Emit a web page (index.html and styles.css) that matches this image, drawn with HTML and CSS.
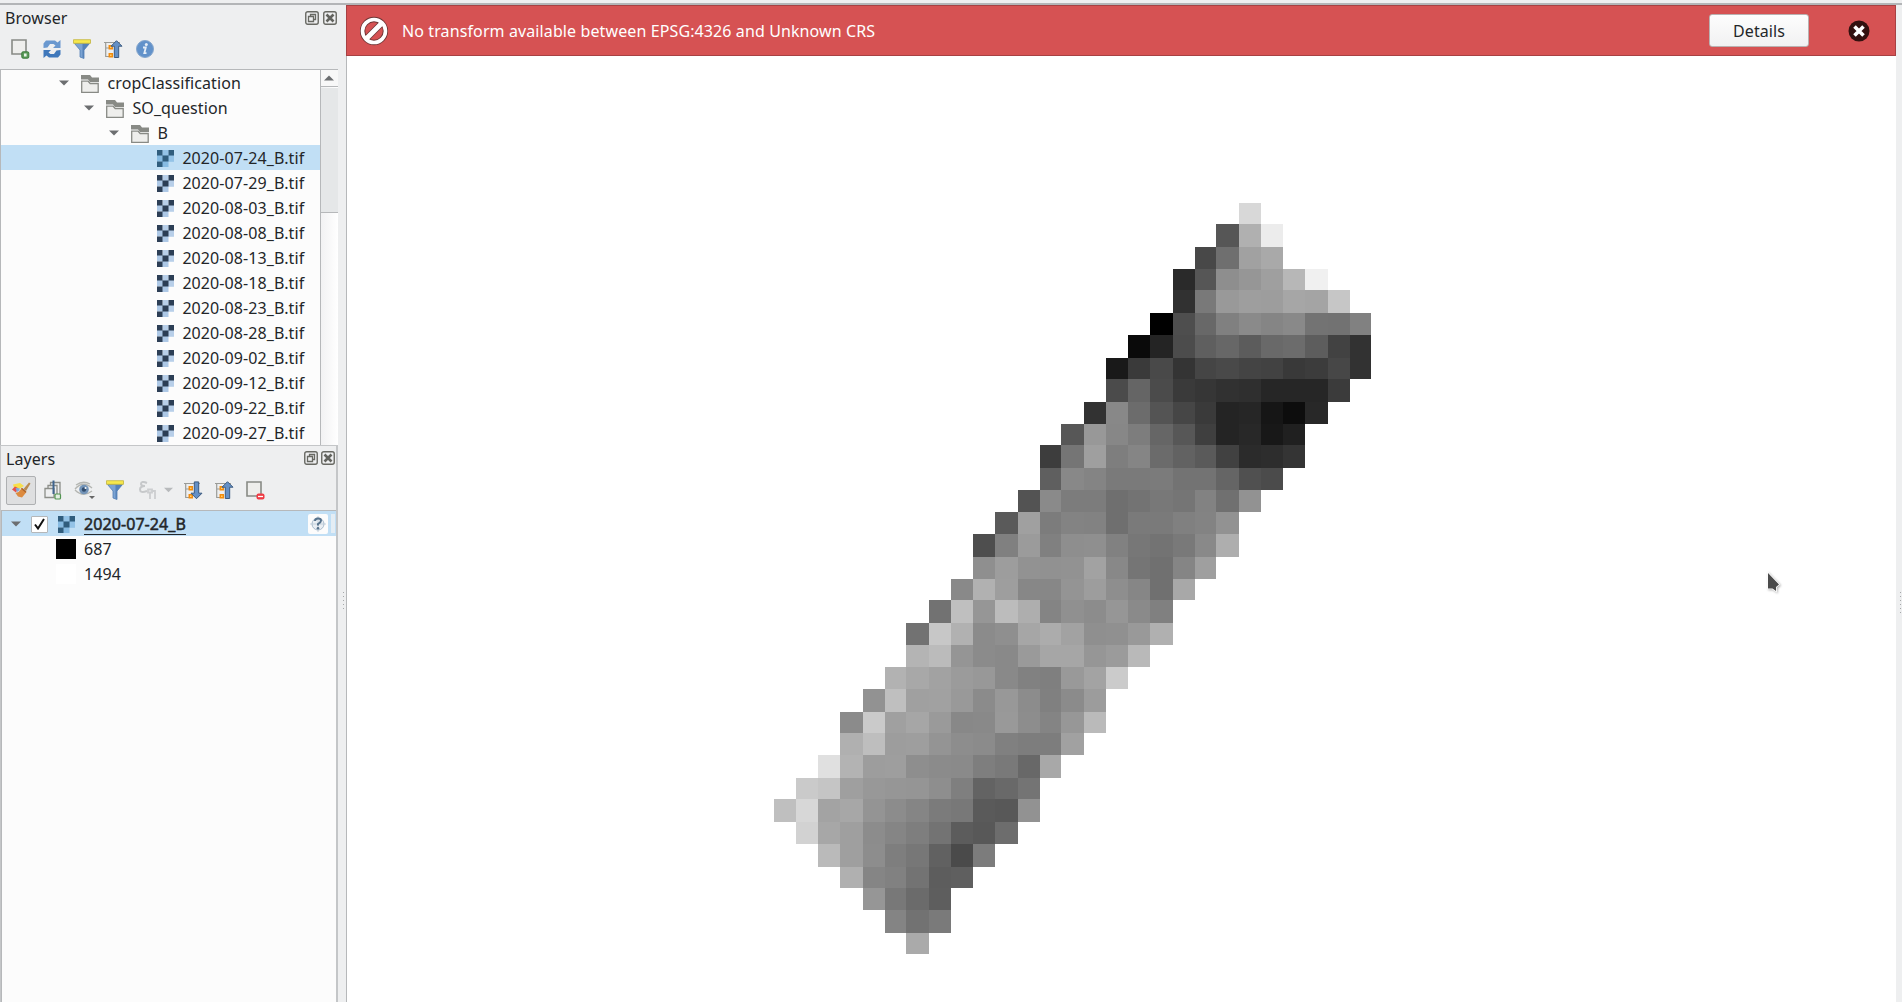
FILE: index.html
```html
<!DOCTYPE html>
<html lang="en">
<head>
<meta charset="utf-8">
<title>Browser and Layers</title>
<link rel="stylesheet" href="styles.css">
</head>
<body>
<svg class="defs" aria-hidden="true">
  <symbol id="raster" viewBox="0 0 17 17">
    <path class="r-light" d="M0 5h17v6.500H0zM5 11.500h6.500V17H5z"/>
    <path class="r-pale" d="M5.500 0h6v5.500h-6zM11.500 5.500H17v6h-5.500z"/>
    <path class="r-dark" d="M0 0h5.500v5.500H0zM11.500 0H17v5.500h-5.500zM5.500 5.500h6v6h-6zM0 11.500h5.500V17H0z"/>
  </symbol>
  <symbol id="folder" viewBox="0 0 18 18">
    <path d="M0 0h9l2 2.500h7V7H9L7 4.500H0z" fill="#888a85"/>
    <path d="M.7 6.200h6.500l2 2.300h8v8.800H.7z" fill="#eeeeec" stroke="#888a85" stroke-width="1.300"/>
  </symbol>
  <symbol id="caret" viewBox="0 0 10 6"><path d="M0 .5h10L5 5.500z" fill="#6c6e70"/></symbol>
  <symbol id="float" viewBox="0 0 14 14">
    <rect x=".75" y=".75" width="12.500" height="12.500" rx="2" fill="none" stroke="#686963" stroke-width="1.400"/>
    <path d="M5.500 5V3.500h5v5H9M3.500 5.500h5v5h-5z" fill="none" stroke="#686963" stroke-width="1.300"/>
  </symbol>
  <symbol id="close" viewBox="0 0 14 14">
    <rect x=".75" y=".75" width="12.500" height="12.500" rx="2" fill="none" stroke="#686963" stroke-width="1.400"/>
    <path d="M3.500 3.500l7 7M10.500 3.500l-7 7" stroke="#62635e" stroke-width="2.600"/>
  </symbol>
  <symbol id="filter" viewBox="0 0 18 20">
    <path d="M1.500 4.500h15L11 11v8.500l-4-1.500v-7z" fill="#7ba3d3" stroke="#527fb5" stroke-width=".8"/>
    <path d="M9.500 5h6.500l-5 6v8l-1.500-.5z" fill="#5582b8"/>
    <path d="M.5 .7h17v3.600H.5z" fill="#f6e84c" stroke="#c2b440" stroke-width=".8"/>
  </symbol>
  <symbol id="collapse" viewBox="0 0 19 19">
    <path d="M0 2.500h16M1.700 2.500v14H5M1.700 8H5" fill="none" stroke="#9a9b97" stroke-width="1.200"/>
    <path d="M5.300 5.700h3v3h-3zM5.300 13.700h3v3h-3z" fill="#ffd27a" stroke="#f28c0c" stroke-width="1.500"/>
    <path d="M12.500 .7l5.500 5.500h-3.300v11.300h-4.400V6.200H7z" fill="#6490c6" stroke="#3c5a80"/>
  </symbol>
  <symbol id="expand" viewBox="0 0 19 19">
    <path d="M0 2.500h16M1.700 2.500v14H5M1.700 8H5" fill="none" stroke="#9a9b97" stroke-width="1.200"/>
    <path d="M5.300 5.700h3v3h-3zM5.300 13.700h3v3h-3z" fill="#ffd27a" stroke="#f28c0c" stroke-width="1.500"/>
    <path d="M12.500 17.700l5.500-5.500h-3.300V.9h-4.400v11.300H7z" fill="#6490c6" stroke="#3c5a80"/>
  </symbol>
</svg>

<div class="app">
  <aside class="side">
    <section class="browser">
      <header class="title"><span>Browser</span>
        <svg class="win"><use href="#float"/></svg><svg class="win"><use href="#close"/></svg></header>
      <div class="tools">
        <svg width="19" height="20" viewBox="0 0 19 20"><path d="M1 1h14v14H1z" fill="#eeeeec" stroke="#888a85" stroke-width="1.600"/><rect x="10.800" y="12.800" width="7" height="6.400" rx="1.300" fill="#5a9a58" stroke="#3c7b3c"/><rect x="13" y="14.500" width="2.600" height="3" fill="#e8f3e8"/></svg>
        <svg width="18" height="20" viewBox="0 0 18 20"><path d="M.5 9V4.500L3 1.500h9l2.500 2L17.500 1v8H10l2.500-2.500L10.500 5H7L4.500 8.500z" fill="#6a98cf"/><path d="M17.500 11v4.500L15 18.500H6l-2.500-2L.5 19v-8H8l-2.500 2.500L7.500 15H11l2.500-3.500z" fill="#3f78bb"/></svg>
        <svg width="18" height="20"><use href="#filter"/></svg>
        <svg width="19" height="19"><use href="#collapse"/></svg>
        <svg class="info" width="18" height="18" viewBox="0 0 18 18"><circle cx="9" cy="9" r="8.500" fill="#6292ca" stroke="#86a7cd"/><circle cx="10.300" cy="4.500" r="1.500" fill="#e6eef7"/><path d="M7 7.500h2.800L8.300 13.200h2.200" fill="none" stroke="#e6eef7" stroke-width="1.800"/></svg>
      </div>
      <div class="treebox">
        <div class="tree" id="tree">
          <div class="row d1"><svg class="caret"><use href="#caret"/></svg><svg class="fold"><use href="#folder"/></svg><span>cropClassification</span></div>
          <div class="row d2"><svg class="caret"><use href="#caret"/></svg><svg class="fold"><use href="#folder"/></svg><span>SO_question</span></div>
          <div class="row d3"><svg class="caret"><use href="#caret"/></svg><svg class="fold"><use href="#folder"/></svg><span>B</span></div>
          <div class="row file selected"><svg class="ras"><use href="#raster"/></svg><span>2020-07-24_B.tif</span></div>
          <div class="row file"><svg class="ras"><use href="#raster"/></svg><span>2020-07-29_B.tif</span></div>
          <div class="row file"><svg class="ras"><use href="#raster"/></svg><span>2020-08-03_B.tif</span></div>
          <div class="row file"><svg class="ras"><use href="#raster"/></svg><span>2020-08-08_B.tif</span></div>
          <div class="row file"><svg class="ras"><use href="#raster"/></svg><span>2020-08-13_B.tif</span></div>
          <div class="row file"><svg class="ras"><use href="#raster"/></svg><span>2020-08-18_B.tif</span></div>
          <div class="row file"><svg class="ras"><use href="#raster"/></svg><span>2020-08-23_B.tif</span></div>
          <div class="row file"><svg class="ras"><use href="#raster"/></svg><span>2020-08-28_B.tif</span></div>
          <div class="row file"><svg class="ras"><use href="#raster"/></svg><span>2020-09-02_B.tif</span></div>
          <div class="row file"><svg class="ras"><use href="#raster"/></svg><span>2020-09-12_B.tif</span></div>
          <div class="row file"><svg class="ras"><use href="#raster"/></svg><span>2020-09-22_B.tif</span></div>
          <div class="row file"><svg class="ras"><use href="#raster"/></svg><span>2020-09-27_B.tif</span></div>
        </div>
        <div class="scroll">
          <div class="up"><svg width="10" height="6" viewBox="0 0 10 6"><path d="M0 5.500h10L5 .5z" fill="#6c6e70"/></svg></div>
          <div class="thumb"></div>
        </div>
      </div>
    </section>

    <section class="layers">
      <header class="title"><span>Layers</span>
        <svg class="win"><use href="#float"/></svg><svg class="win"><use href="#close"/></svg></header>
      <div class="ltools">
        <div class="pressed"><svg width="20" height="18" viewBox="0 0 20 18"><path d="M2 3.500L9 2l4 3-5 3-5-1z" fill="#f7df4a"/><path d="M1 8.500l3-3 3 1.500-2 4.500z" fill="#e8504a"/><path d="M4.500 7l4 .3v2L6 11z" fill="#7ea9e0"/><path d="M4.500 12l3-1L11 7l4.500 4-4.500 5.500-4-1z" fill="#dc8a3e"/><path d="M12.500 8L18 1.500l1.500 1L15 10z" fill="#b98a4e"/><path d="M10.500 7.200l4.500 4" stroke="#a8612a" stroke-width="1.200"/></svg></div>
        <svg class="add" width="18" height="20" viewBox="0 0 18 20"><path d="M6.500 5V2.500h9.500V14M4 8V5.500h9V14M1 17.500V8.500h9v9z" fill="none" stroke="#8c8e89" stroke-width="1.300"/><path d="M9.500 .5V14" stroke="#40658f" stroke-width="2"/><rect x="11" y="14" width="5.500" height="5" rx="1" fill="#e3efe2" stroke="#519450" stroke-width="1.200"/></svg>
        <svg class="eye" width="21" height="19" viewBox="0 0 21 19"><path d="M1 8q8-9 17-1M1 9q8 8 17 1M2 4q7-5 14-1" fill="none" stroke="#b4b6b2" stroke-width="1.300"/><circle cx="10" cy="8.500" r="4.800" fill="#7394b8"/><circle cx="10" cy="8.500" r="2.200" fill="#314c6d"/><circle cx="11.500" cy="7" r="1" fill="#fff"/><path d="M15 15h6l-3 3z" fill="#666"/></svg>
        <svg class="fil" width="18" height="20"><use href="#filter"/></svg>
        <svg class="exp" width="18" height="19" viewBox="0 0 18 19"><path d="M8 2Q2-.5 2 3q0 2 4 2-5 0-5 3.500 0 4 7 1.500" fill="none" stroke="#c6c8ca" stroke-width="2"/><path d="M9 8.500h4v3H9zM11 11v7M16 18v-8h-3" fill="none" stroke="#ccced0" stroke-width="1.800"/></svg>
        <svg class="dis" width="9" height="6" viewBox="0 0 10 6"><path d="M0 .5h10L5 5.500z" fill="#b8babc"/></svg>
        <svg class="ex" width="19" height="19"><use href="#expand"/></svg>
        <svg class="co" width="19" height="19"><use href="#collapse"/></svg>
        <svg width="19" height="19" viewBox="0 0 19 19"><path d="M1 1h14v14H1z" fill="#eeeeec" stroke="#888a85" stroke-width="1.600"/><rect x="10.500" y="12.500" width="8" height="6" rx="2" fill="#ef3b44"/><path d="M12 15.500h5" stroke="#fff" stroke-width="1.300"/></svg>
      </div>
      <div class="ltree">
        <div class="lrow selected">
          <svg class="caret"><use href="#caret"/></svg>
          <span class="check"><svg width="11" height="12" viewBox="0 0 11 12"><path d="M1 6.500l3 4L10 1" fill="none" stroke="#111" stroke-width="2"/></svg></span>
          <svg class="ras"><use href="#raster"/></svg>
          <span class="name">2020-07-24_B</span>
          <span class="crs"><svg width="16" height="16" viewBox="0 0 16 16"><circle cx="8" cy="8" r="6" fill="#e9eef3" stroke="#a9bccd"/><path d="M8 0v16M0 8h16" stroke="#b9c9d6" stroke-width=".8"/><path d="M5 5q0-2.500 3-2.500t3 2.300Q11 6.300 8 8v1.500" fill="none" stroke="#56728c" stroke-width="2"/><circle cx="8" cy="12.200" r="1.300" fill="#56728c"/></svg></span>
          <span class="sliver"></span>
        </div>
        <div class="lrow legend"><i class="swatch black"></i><span>687</span></div>
        <div class="lrow legend"><i class="swatch white"></i><span>1494</span></div>
      </div>
    </section>
  </aside>
  <div class="split"></div>

  <main class="map">
    <div class="message">
      <svg class="ban" width="28" height="30" viewBox="0 0 28 30"><circle cx="14" cy="15" r="11.500" fill="none" stroke="#6e3535" stroke-width="5.500"/><path d="M6.500 22.500l15-15" stroke="#6e3535" stroke-width="6.500"/><circle cx="14" cy="15" r="11.500" fill="none" stroke="#fff" stroke-width="3.600"/><path d="M6.500 22.500l15-15" stroke="#fff" stroke-width="5"/></svg>
      <span class="text">No transform available between EPSG:4326 and Unknown CRS</span>
      <button class="details">Details</button>
      <svg class="dismiss" width="22" height="22" viewBox="0 0 22 22"><circle cx="11" cy="11" r="10.500" fill="#33110f"/><path d="M6.500 6.500l9 9M15.500 6.500l-9 9" stroke="#fff" stroke-width="3.600"/></svg>
    </div>
    <svg class="raster" id="pixels" width="597" height="751" viewBox="774 203 597 751" shape-rendering="crispEdges"></svg>
    <svg class="cursor" width="15" height="23" viewBox="0 0 15 23"><path d="M2 2l11 11.500-3 2.500v4l-3.500-2.500H2z" fill="#4b4b4b" stroke="#fff" stroke-width="1.600" paint-order="stroke"/></svg>
  </main>
  <div class="right"></div>
</div>
<script src="raster.js"></script>
</body>
</html>
```
FILE: styles.css
```css
* { box-sizing: border-box; }
body {
  margin: 0;
  width: 1902px;
  height: 1002px;
  overflow: hidden;
  background: #eeeff0;
  color: #232629;
  font: 16px/25px "Noto Sans", sans-serif;
  letter-spacing: .08px;
}
svg { display: block; flex: none; }
.defs { position: absolute; width: 0; height: 0; }
.app {
  display: flex;
  height: 999px;
  border-top: 2px solid #b3b5b7;
  margin-top: 3px;
}
.side { width: 338px; display: flex; flex-direction: column; flex: none; }
.browser { height: 440px; display: flex; flex-direction: column; flex: none; }
.title { display: flex; align-items: center; height: 26px; padding-left: 5px; flex: none; }
.title span { flex: 1; }
.win { width: 14px; height: 14px; margin-right: 3px; }
.browser .title { padding-top: 1px; }
.browser .win { margin-bottom: 2px; }
.browser .win:last-child { margin-left: 1px; margin-right: 1px; }
.tools { display: flex; align-items: center; height: 38px; padding: 0 0 2px 11px; gap: 12.6px; flex: none; }
.info { margin-left: .6px; }
.treebox { display: flex; height: 376px; border-top: 1px solid #b6b8ba; border-left: 1px solid #b6b8ba; background: #fcfcfc; }
.tree { width: 319px; overflow: hidden; }
.row { display: flex; align-items: center; height: 25px; white-space: nowrap; }
.row span { padding-top: 2px; }
.caret { width: 10px; height: 6px; }
.fold { width: 18px; height: 18px; margin: 2px 8.500px 0 12px; }
.ras { width: 17px; height: 17px; margin-top: 2px; }
.d1 { padding-left: 58px; }
.d2 { padding-left: 83px; }
.d3 { padding-left: 108px; }
.file { padding-left: 156px; gap: 8.400px; }
.selected { background: #c1dff5; }
.ras { --light: #adc8e6; --pale: #b8cfe9; --dark: #2c3e55; }
.selected .ras { --light: #87bbe2; --pale: #94c3e7; --dark: #305d7d; }
.r-light { fill: var(--light); }
.r-pale { fill: var(--pale); }
.r-dark { fill: var(--dark); }
.scroll { width: 18px; border-left: 1px solid #b6b8ba; background: linear-gradient(90deg, #f2f2f3, #fff); }
.up { height: 17px; padding-right: 2px; border-bottom: 1px solid #b6b8ba; display: grid; place-items: center; background: #f8f8f8; }
.thumb { height: 125px; margin-top: 1px; background: #e5e7e8; border-bottom: 1px solid #b6b8ba; }
.layers { flex: 1; display: flex; flex-direction: column; border: solid #c4c6c8; border-width: 1px 2px 0 1px; }
.layers .title { padding-left: 5px; }
.layers .win { margin-bottom: 2px; }
.layers .win:last-child { margin-right: 1px; }
.ltools { display: flex; align-items: center; height: 38px; padding: 0 0 2px 5px; flex: none; }
.pressed { width: 30px; height: 29px; border: 1px solid #aeb0b2; border-radius: 2px; background: #dedfe0; display: grid; place-items: center; margin-right: 8px; }
.add { margin-right: 12px; }
.eye { margin-right: 11px; }
.fil { margin-right: 15px; }
.exp { margin-right: 7px; }
.dis { margin-right: 11px; }
.ex { margin-right: 12px; }
.co { margin-right: 12px; }
.ltree { flex: 1; background: #fcfcfc; border-top: 1px solid #b6b8ba; border-left: 1px solid #b6b8ba; }
.lrow { display: flex; align-items: center; height: 25px; }
.lrow.selected { padding-left: 9px; }
.check { width: 17px; height: 17px; margin: 1px 10px 0; background: #fff; border: 1px solid #b4b7b9; display: grid; place-items: center; border-radius: 1px; }
.name { margin-left: 9px; padding-top: 2px; text-decoration: underline; text-underline-offset: 4px; text-decoration-thickness: 1px; text-decoration-skip-ink: none; -webkit-text-stroke: .5px #232629; flex: 1; }
.crs { width: 20px; height: 20px; border-radius: 2px; background: #fcfcfc; display: grid; place-items: center; }
.sliver { width: 4px; height: 19px; margin: 0 1px 0 3px; background: #e4edf4; }
.legend { padding-left: 54px; gap: 8px; }
.legend span { padding-top: 2px; }
.swatch { width: 20px; height: 20px; margin-top: 1px; }
.black { background: #000; }
.white { background: #fff; }
.split { width: 8px; flex: none; display: flex; }
.split::before { content: ""; width: 1px; height: 17px; margin: 587px 0 0 5px; background: repeating-linear-gradient(#a5a7a9 0 1px, transparent 1px 4px); }
.map { position: relative; width: 1550px; flex: none; background: #fff; border-left: 1px solid #b6b8ba; }
.message { display: flex; align-items: center; height: 51px; margin-left: -1px; background: #d65253; border: 1px solid #a74143; color: #fff; padding-left: 13px; }
.text { margin-left: 14px; padding-top: 1px; flex: 1; letter-spacing: .11px; }
.details { width: 100px; height: 33px; margin-right: 39px; padding: 1px 0 0; border: 1px solid #b9b1b1; border-radius: 3px; background: linear-gradient(#fdfdfd, #f1f1f2); color: #232629; font: inherit; letter-spacing: .08px; }
.dismiss { margin-right: 25px; }
.raster { position: absolute; left: 427px; top: 198px; }
.cursor { position: absolute; left: 1419px; top: 566px; filter: drop-shadow(1px 1px 1px rgba(0,0,0,.3)); }
.right { width: 6px; }
.right::before { content: ""; display: block; width: 1px; height: 21px; margin: 587px 0 0 4px; background: repeating-linear-gradient(#a5a7a9 0 1px, transparent 1px 4px); }
```
FILE: raster.js
```js
// Column and row edges of the raster cells, in window pixels.
const xs = [774,796,818,840,863,885,906,929,951,973,995,1018,1040,1061,1084,1106,1128,1150,1173,1195,1216,1239,1261,1283,1305,1328,1350,1371];
const ys = [203,224,247,269,290,313,335,358,379,402,424,445,468,490,512,534,557,579,600,623,645,667,689,712,733,755,778,799,822,844,867,888,910,933,954];
// Each row: first column, then one grey level per cell.
const rows = [
  [21, "d8"],
  [20, "56 b0 ec"],
  [19, "48 6f a1 a9"],
  [18, "2a 56 8e 96 9f b7 f0"],
  [18, "31 79 99 9e 9d a6 a4 c6"],
  [17, "00 4e 68 80 8a 85 89 73 72 81"],
  [16, "0a 24 4c 5f 67 5c 69 6c 5d 42 32"],
  [15, "19 3a 49 34 45 49 44 42 39 3c 47 32"],
  [15, "4b 65 4b 3a 36 31 2f 26 26 26 3b"],
  [14, "32 88 6c 54 46 3a 24 26 16 0d 28"],
  [13, "57 98 87 7d 66 57 3f 24 28 18 20"],
  [12, "3d 75 9f 7e 85 6b 62 5a 41 2b 2d 34"],
  [12, "5f 88 84 7a 7a 7b 73 73 65 50 4b"],
  [11, "53 8a 7c 7c 6f 73 78 75 82 70 92"],
  [10, "5a a0 7c 83 82 6f 7a 7a 80 83 92"],
  [9, "4e 80 9b 80 8e 8f 81 77 73 79 89 ae"],
  [9, "8f 9d 92 91 92 a2 88 75 70 85 9f"],
  [8, "89 b1 9e 87 87 94 9d 8e 86 70 a8"],
  [7, "72 bf 96 bc ae 84 90 8c 96 8a 80"],
  [6, "72 c7 b1 8b 8f a6 ac a2 8f 90 99 b0"],
  [6, "b4 bb 95 8b 89 9a a6 a6 96 9b b9"],
  [5, "b2 a8 a2 9b 98 89 81 7f 99 a3 cb"],
  [4, "92 bf a0 a1 99 8b 98 8c 80 8b 9c"],
  [3, "8b ca a0 a6 9a 88 89 99 8d 84 97 ba"],
  [3, "b0 be 9d 9e 94 8d 8b 80 7d 7d a1"],
  [2, "e0 b3 9d 9e 8e 8b 8a 7e 79 68 a8"],
  [1, "ca c5 9f 98 96 95 8e 7f 63 69 74"],
  [0, "bf d7 a3 a7 94 8c 85 7b 78 5a 58 92"],
  [1, "d2 a7 9f 8c 85 7e 73 5c 58 6d"],
  [2, "ba 9f 8d 7e 77 61 4a 7c"],
  [3, "b0 85 81 73 5d 5f"],
  [4, "96 78 6b 5e"],
  [5, "84 72 7a"],
  [6, "aa"]
];
const svg = document.getElementById("pixels");
rows.forEach(([start, cells], r) => {
  cells.split(" ").forEach((g, i) => {
    const c = start + i;
    const rect = document.createElementNS("http://www.w3.org/2000/svg", "rect");
    rect.setAttribute("x", xs[c]);
    rect.setAttribute("y", ys[r]);
    rect.setAttribute("width", xs[c + 1] - xs[c]);
    rect.setAttribute("height", ys[r + 1] - ys[r]);
    rect.setAttribute("fill", "#" + g + g + g);
    svg.appendChild(rect);
  });
});
```
